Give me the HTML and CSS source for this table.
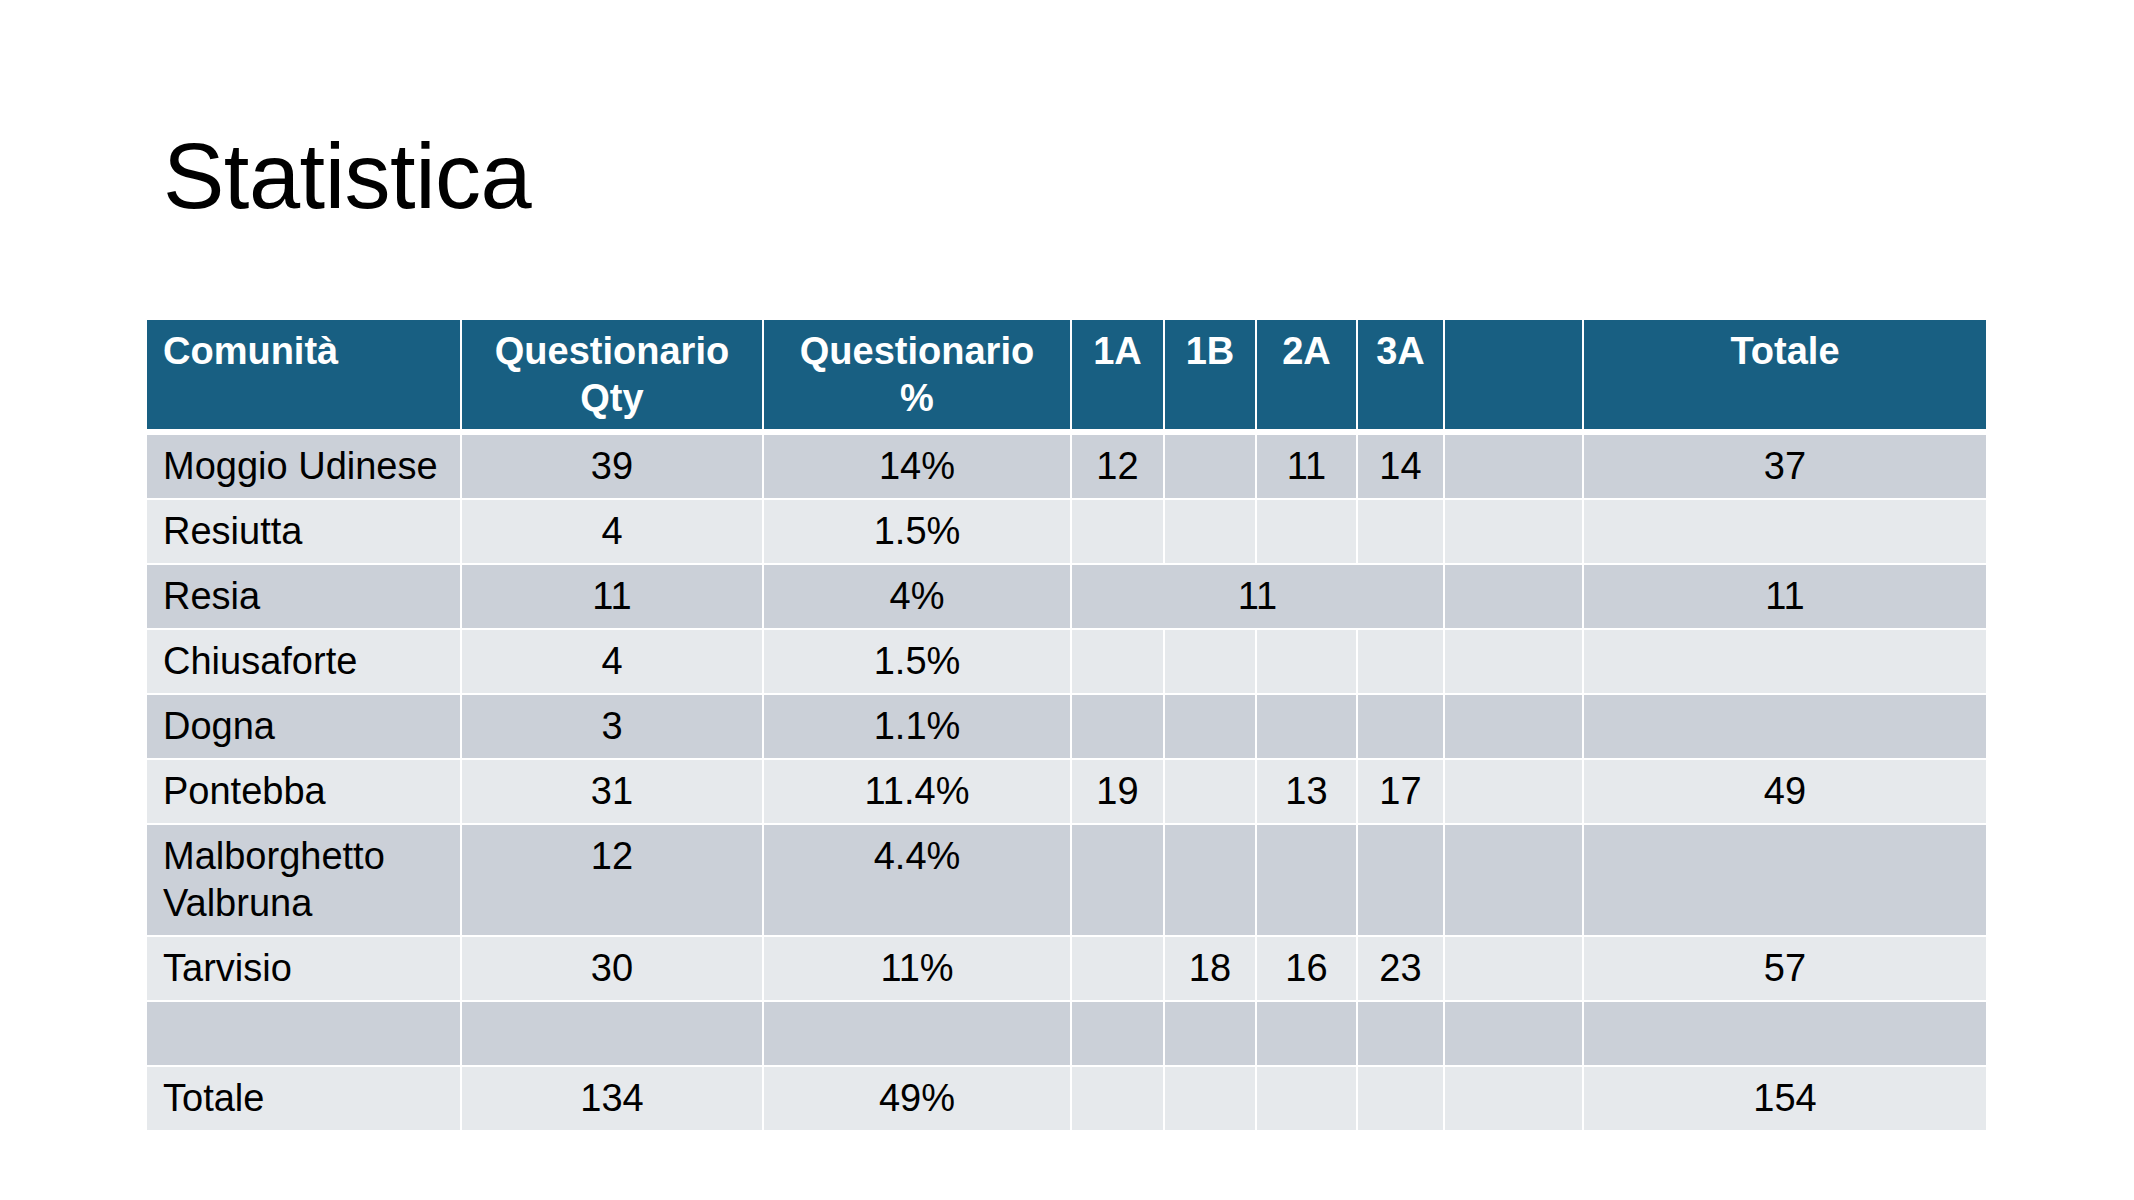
FILE: index.html
```html
<!DOCTYPE html>
<html lang="it">
<head>
<meta charset="utf-8">
<title>Statistica</title>
<link rel="stylesheet" href="styles.css">
</head>
<body>
<div class="slide">
  <h1 class="title">Statistica</h1>
  <table class="stats">
    <colgroup>
      <col class="c-name">
      <col class="c-qty">
      <col class="c-pct">
      <col class="c-1a">
      <col class="c-1b">
      <col class="c-2a">
      <col class="c-3a">
      <col class="c-blank">
      <col class="c-tot">
    </colgroup>
    <thead>
      <tr>
        <th class="left">Comunità</th>
        <th>Questionario<br>Qty</th>
        <th>Questionario<br>%</th>
        <th>1A</th>
        <th>1B</th>
        <th>2A</th>
        <th>3A</th>
        <th></th>
        <th>Totale</th>
      </tr>
    </thead>
    <tbody>
      <tr class="dark">
        <td class="left">Moggio Udinese</td><td>39</td><td>14%</td><td>12</td><td></td><td>11</td><td>14</td><td></td><td>37</td>
      </tr>
      <tr class="light">
        <td class="left">Resiutta</td><td>4</td><td>1.5%</td><td></td><td></td><td></td><td></td><td></td><td></td>
      </tr>
      <tr class="dark">
        <td class="left">Resia</td><td>11</td><td>4%</td><td colspan="4">11</td><td></td><td>11</td>
      </tr>
      <tr class="light">
        <td class="left">Chiusaforte</td><td>4</td><td>1.5%</td><td></td><td></td><td></td><td></td><td></td><td></td>
      </tr>
      <tr class="dark">
        <td class="left">Dogna</td><td>3</td><td>1.1%</td><td></td><td></td><td></td><td></td><td></td><td></td>
      </tr>
      <tr class="light">
        <td class="left">Pontebba</td><td>31</td><td>11.4%</td><td>19</td><td></td><td>13</td><td>17</td><td></td><td>49</td>
      </tr>
      <tr class="dark">
        <td class="left">Malborghetto Valbruna</td><td>12</td><td>4.4%</td><td></td><td></td><td></td><td></td><td></td><td></td>
      </tr>
      <tr class="light">
        <td class="left">Tarvisio</td><td>30</td><td>11%</td><td></td><td>18</td><td>16</td><td>23</td><td></td><td>57</td>
      </tr>
      <tr class="dark">
        <td class="left">&nbsp;</td><td></td><td></td><td></td><td></td><td></td><td></td><td></td><td></td>
      </tr>
      <tr class="light">
        <td class="left">Totale</td><td>134</td><td>49%</td><td></td><td></td><td></td><td></td><td></td><td>154</td>
      </tr>
    </tbody>
  </table>
</div>
</body>
</html>
```

FILE: styles.css
```css
html, body {
  margin: 0;
  padding: 0;
  background: #ffffff;
}

.slide {
  width: 2134px;
  height: 1200px;
  box-sizing: border-box;
  padding: 130px 0 0 147px;
  font-family: "Liberation Sans", Arial, sans-serif;
  color: #000000;
  overflow: hidden;
}

.title {
  margin: 0 0 98px 16px;
  font-size: 92px;
  line-height: 92px;
  font-weight: 400;
  letter-spacing: -0.5px;
}

.stats {
  width: 1839px;
  table-layout: fixed;
  border-collapse: collapse;
  font-size: 38px;
  line-height: 47px;
}

.c-name { width: 314px; }
.c-qty { width: 302px; }
.c-pct { width: 308px; }
.c-1a { width: 93px; }
.c-1b { width: 92px; }
.c-2a { width: 101px; }
.c-3a { width: 87px; }
.c-blank { width: 139px; }
.c-tot { width: 403px; }

.stats th,
.stats td {
  border: 2px solid #ffffff;
  padding: 8px 16px 8px;
  text-align: center;
  vertical-align: top;
  white-space: normal;
}

.stats th {
  background: #185f82;
  color: #ffffff;
  font-weight: 700;
  padding-bottom: 7px;
  border-bottom: 6px solid #ffffff;
}

.stats thead tr:first-child th {
  border-top: none;
}

.stats .left {
  text-align: left;
}

.stats tr.dark td {
  background: #cbd0d8;
}

.stats tr.light td {
  background: #e6e9ec;
}

.stats td:first-child,
.stats th:first-child {
  border-left: none;
}

.stats td:last-child,
.stats th:last-child {
  border-right: none;
}
```
